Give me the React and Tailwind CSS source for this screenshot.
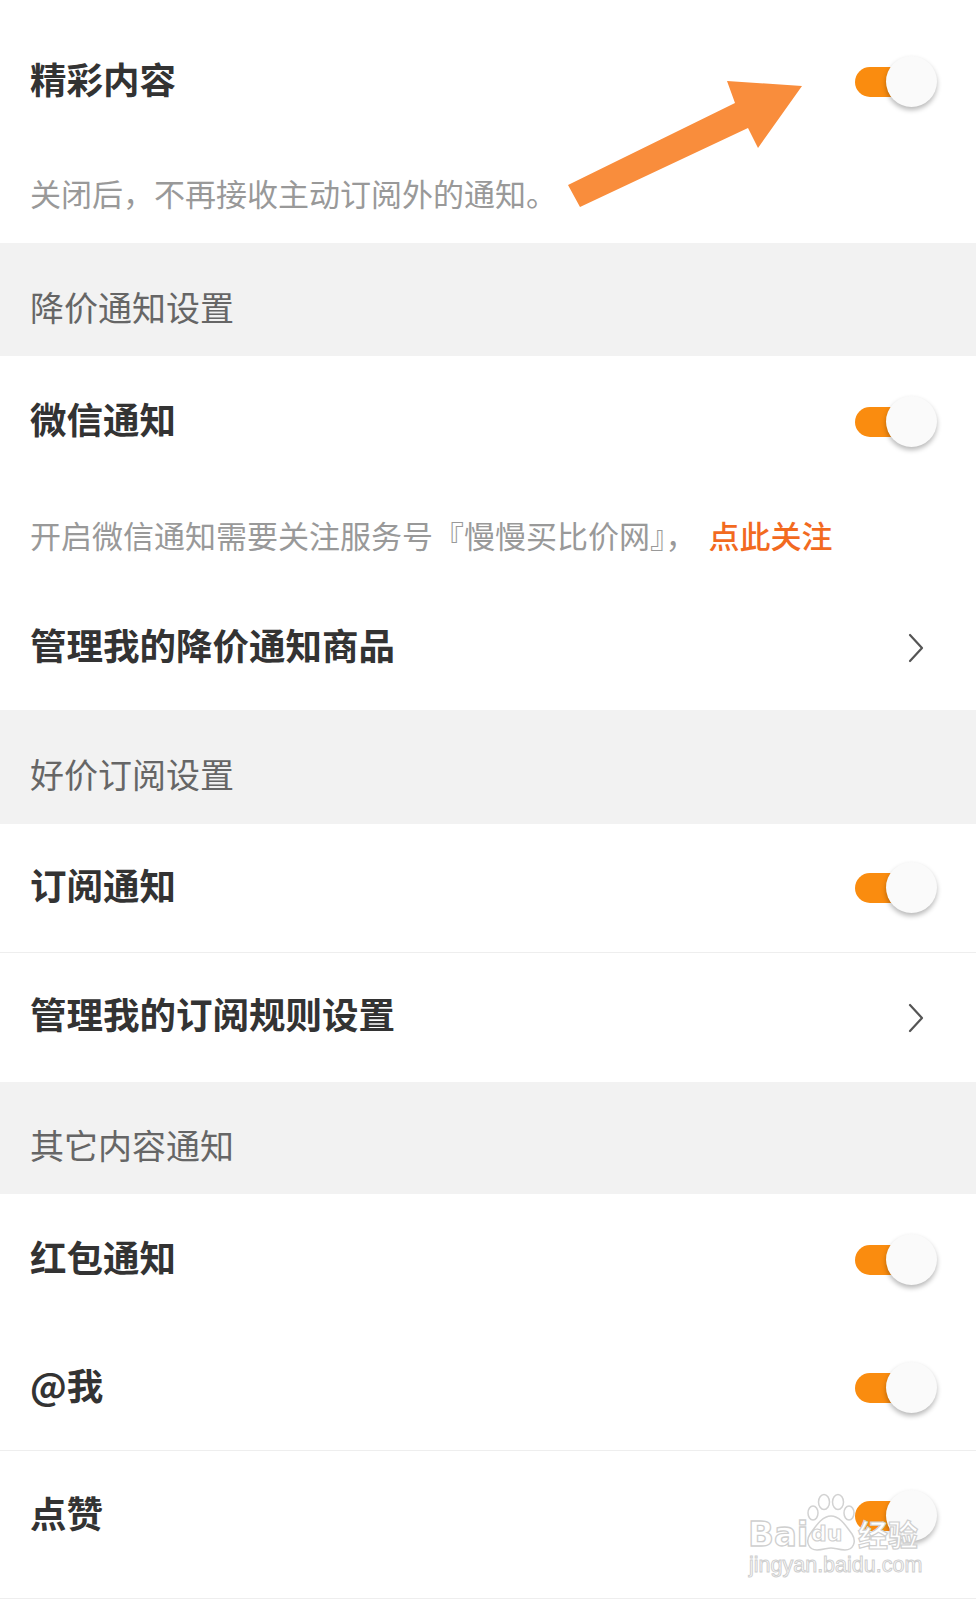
import React from 'react';

const Toggle = () => (
  <div className="relative w-[82px] h-[52px] shrink-0">
    <div className="absolute left-0 top-[11px] w-[66px] h-[30px] rounded-full bg-[#fa8c0f]" />
    <div className="absolute right-0 top-0 w-[51px] h-[51px] rounded-full bg-[#fafafa] shadow-[0_3px_5px_rgba(0,0,0,0.28)]" />
  </div>
);

const Chevron = () => (
  <svg width="16" height="30" viewBox="0 0 16 30" className="shrink-0">
    <path d="M2 2 L14 15 L2 28" fill="none" stroke="#555" strokeWidth="2.2" strokeLinecap="round" strokeLinejoin="round" />
  </svg>
);

const Title = ({ children }) => (
  <span className="mb-[6px] text-[36.5px] leading-none font-bold text-[#333]">{children}</span>
);

const ToggleRow = ({ title, h }) => (
  <div className={`flex items-center justify-between pl-[30px] pr-[39px] ${h}`}>
    <Title>{title}</Title>
    <Toggle />
  </div>
);

const LinkRow = ({ title, h }) => (
  <div className={`flex items-center justify-between pl-[30px] pr-[52px] ${h}`}>
    <Title>{title}</Title>
    <Chevron />
  </div>
);

const SectionHeader = ({ title, h }) => (
  <div className={`flex items-center bg-[#f2f2f2] pl-[30px] pt-[16px] ${h}`}>
    <span className="mb-[2px] text-[34px] leading-none text-[#666]">{title}</span>
  </div>
);

const Divider = () => <div className="h-px bg-[#eeeeee]" />;

// annotation arrow pointing at the first switch
const Arrow = () => (
  <svg className="absolute left-0 top-0 pointer-events-none" width="976" height="240" viewBox="0 0 976 240">
    <polygon
      points="568,185 735,103 727,81 802,86 758,148 748,128 580,207"
      fill="#f98d3c"
    />
  </svg>
);

const Watermark = () => (
  <div className="absolute left-[748px] top-[1492px] w-[180px] h-[90px] pointer-events-none">
    <svg className="absolute left-[57px] top-[1px]" width="52" height="60" viewBox="0 0 52 60">
      <g fill="#fff" stroke="#d2d2d2" strokeWidth="1.5">
        <ellipse cx="8" cy="20" rx="5" ry="7" />
        <ellipse cx="19" cy="9" rx="5.5" ry="7.5" />
        <ellipse cx="33" cy="9" rx="5.5" ry="7.5" />
        <ellipse cx="44" cy="20" rx="5" ry="7" />
        <path d="M26 23 C17 23 11 33 5 41 C0 49 4 57 12 57 C18 57 22 55 26 55 C30 55 34 57 40 57 C48 57 52 49 47 41 C41 33 35 23 26 23 Z" />
      </g>
    </svg>
    <span className="absolute left-0 top-[25px] text-[34px] leading-none font-bold text-white [-webkit-text-stroke:1.3px_#cfcfcf] font-['DejaVu_Sans',sans-serif]">
      Bai
    </span>
    <span className="absolute left-[63px] top-[31px] text-[22px] leading-none font-bold text-white [-webkit-text-stroke:1.1px_#cfcfcf] font-['DejaVu_Sans',sans-serif]">
      du
    </span>
    <span className="absolute left-[110px] top-[26px] text-[30px] leading-none font-bold text-white [-webkit-text-stroke:1.2px_#cfcfcf]">
      经验
    </span>
    <span className="absolute left-[1px] top-[63px] text-[21.5px] leading-none text-white [-webkit-text-stroke:1px_#cfcfcf] font-['Liberation_Sans',sans-serif]">
      jingyan.baidu.com
    </span>
  </div>
);

export default function App() {
  return (
    <div className="relative w-[976px] h-[1600px] overflow-hidden bg-white font-['Noto_Sans_CJK_SC',sans-serif]">
      {/* 精彩内容 */}
      <div className="pb-[15px]">
        <ToggleRow title="精彩内容" h="h-[164px]" />
        <div className="flex items-center h-[64px] pl-[30px]">
          <span className="mb-[7px] text-[31px] leading-none text-[#999]">关闭后，不再接收主动订阅外的通知。</span>
        </div>
      </div>

      <SectionHeader title="降价通知设置" h="h-[113px]" />
      <ToggleRow title="微信通知" h="h-[132px]" />
      <div className="flex items-center h-[98px] pl-[30px]">
        <span className="mb-[6px] text-[31px] leading-none text-[#999]">开启微信通知需要关注服务号『慢慢买比价网』，</span>
        <span className="ml-[12px] mb-[6px] text-[31px] leading-none font-medium text-[#f26a1f]">点此关注</span>
      </div>
      <LinkRow title="管理我的降价通知商品" h="h-[124px]" />

      <SectionHeader title="好价订阅设置" h="h-[114px]" />
      <ToggleRow title="订阅通知" h="h-[128px]" />
      <Divider />
      <LinkRow title="管理我的订阅规则设置" h="h-[129px]" />

      <SectionHeader title="其它内容通知" h="h-[112px]" />
      <ToggleRow title="红包通知" h="h-[132px]" />
      <ToggleRow title="@我" h="h-[124px]" />
      <Divider />
      <div className="pb-[17px]">
        <ToggleRow title="点赞" h="h-[130px]" />
      </div>
      <Divider />

      <Arrow />
      <Watermark />
    </div>
  );
}
